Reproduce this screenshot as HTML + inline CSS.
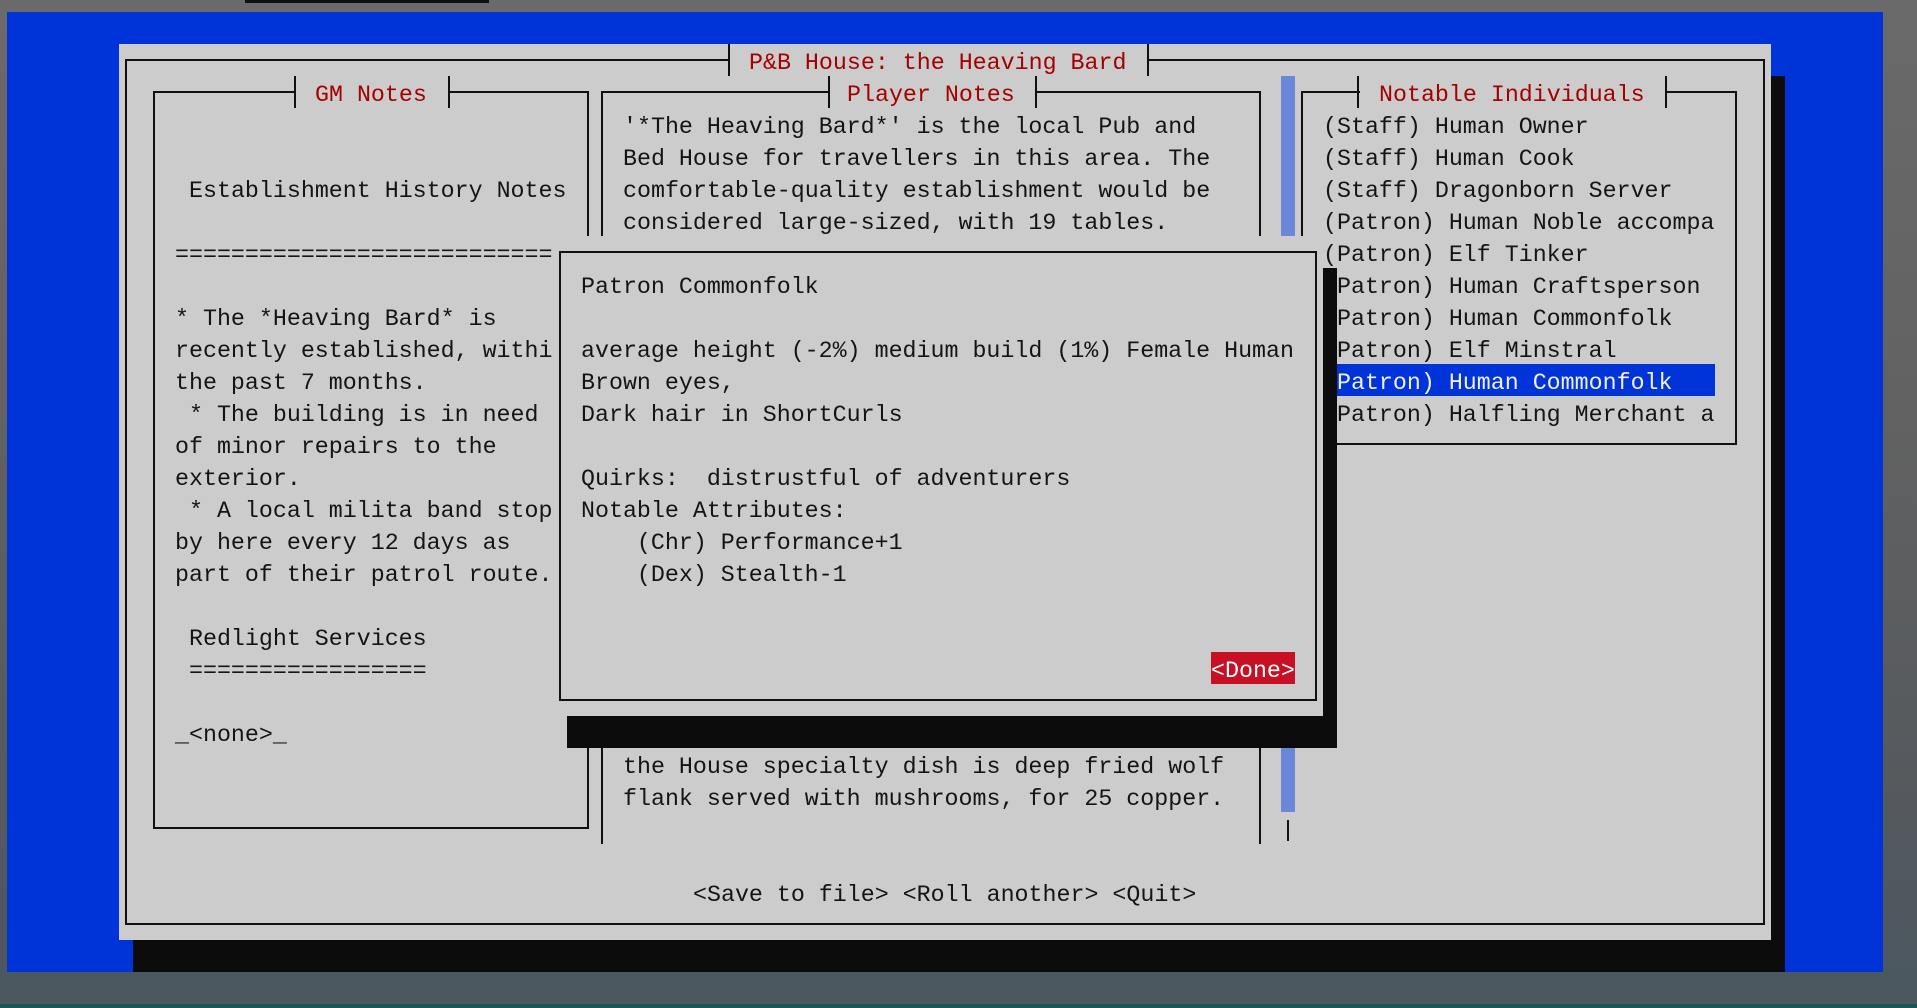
<!DOCTYPE html>
<html><head><meta charset="utf-8"><style>
*{margin:0;padding:0;box-sizing:border-box}
html,body{width:1917px;height:1008px;overflow:hidden}
body{position:relative;background:linear-gradient(180deg,#6a6a6a 0px,#626262 400px,#55595d 800px,#4b5860 1000px);font-family:"Liberation Mono","DejaVu Sans Mono",monospace}
.a{position:absolute}
.t{position:absolute;white-space:pre;font-size:23.3px;line-height:32px;height:32px;color:#141414;padding-top:3px}
.r{color:#a40000}
.h{position:absolute;height:2px;background:#111}
.v{position:absolute;width:2px;background:#111}
</style></head><body>
<div class="a" style="left:245px;top:0;width:244px;height:3px;background:#111"></div>
<div class="a" style="left:0;top:1004px;width:1917px;height:4px;background:#1b5557"></div>
<div class="a" style="left:7px;top:12px;width:1876px;height:960px;background:#0033d8"></div>
<div class="a" style="left:1771px;top:76px;width:14px;height:896px;background:#0c0c0c"></div>
<div class="a" style="left:133px;top:940px;width:1652px;height:32px;background:#0c0c0c"></div>
<div class="a" style="left:119px;top:44px;width:1652px;height:896px;background:#cccccc"></div>
<div class="a" style="left:125px;top:59px;width:1640px;height:866px;border:2px solid #111"></div>
<div class="a" style="left:729px;top:50px;width:420px;height:20px;background:#ccc"></div>
<div class="v" style="left:728px;top:44px;height:32px"></div>
<div class="v" style="left:1147px;top:44px;height:32px"></div>
<div class="t r" style="left:749px;top:44px">P&amp;B House: the Heaving Bard</div>

<div class="a" style="left:153px;top:91px;width:436px;height:738px;border:2px solid #111"></div>
<div class="a" style="left:296px;top:85px;width:152px;height:14px;background:#ccc"></div>
<div class="v" style="left:294px;top:76px;height:32px"></div>
<div class="v" style="left:448px;top:76px;height:32px"></div>
<div class="t r" style="left:315px;top:76px">GM Notes</div>
<div class="t" style="left:189px;top:172px">Establishment History Notes</div>
<div class="t" style="left:175px;top:236px">===========================</div>
<div class="t" style="left:175px;top:300px">* The *Heaving Bard* is</div>
<div class="t" style="left:175px;top:332px">recently established, withi</div>
<div class="t" style="left:175px;top:364px">the past 7 months.</div>
<div class="t" style="left:175px;top:396px"> * The building is in need</div>
<div class="t" style="left:175px;top:428px">of minor repairs to the</div>
<div class="t" style="left:175px;top:460px">exterior.</div>
<div class="t" style="left:175px;top:492px"> * A local milita band stop</div>
<div class="t" style="left:175px;top:524px">by here every 12 days as</div>
<div class="t" style="left:175px;top:556px">part of their patrol route.</div>
<div class="t" style="left:175px;top:620px"> Redlight Services</div>
<div class="t" style="left:175px;top:652px"> =================</div>
<div class="t" style="left:175px;top:716px">_&lt;none&gt;_</div>

<div class="h" style="left:601px;top:91px;width:660px"></div>
<div class="v" style="left:601px;top:91px;height:753px"></div>
<div class="v" style="left:1259px;top:91px;height:753px"></div>
<div class="a" style="left:830px;top:85px;width:205px;height:14px;background:#ccc"></div>
<div class="v" style="left:828px;top:76px;height:32px"></div>
<div class="v" style="left:1035px;top:76px;height:32px"></div>
<div class="t r" style="left:847px;top:76px">Player Notes</div>
<div class="t" style="left:623px;top:108px">'*The Heaving Bard*' is the local Pub and</div>
<div class="t" style="left:623px;top:140px">Bed House for travellers in this area. The</div>
<div class="t" style="left:623px;top:172px">comfortable-quality establishment would be</div>
<div class="t" style="left:623px;top:204px">considered large-sized, with 19 tables.</div>
<div class="t" style="left:623px;top:748px">the House specialty dish is deep fried wolf</div>
<div class="t" style="left:623px;top:780px">flank served with mushrooms, for 25 copper.</div>

<div class="a" style="left:1281px;top:76px;width:14px;height:160px;background:#6a86d8"></div>
<div class="a" style="left:1281px;top:748px;width:14px;height:64px;background:#6a86d8"></div>
<div class="v" style="left:1287px;top:820px;height:21px"></div>

<div class="a" style="left:1301px;top:91px;width:436px;height:354px;border:2px solid #111"></div>
<div class="a" style="left:1360px;top:85px;width:306px;height:14px;background:#ccc"></div>
<div class="v" style="left:1357px;top:76px;height:32px"></div>
<div class="v" style="left:1665px;top:76px;height:32px"></div>
<div class="t r" style="left:1379px;top:76px">Notable Individuals</div>
<div class="t" style="left:1323px;top:108px">(Staff) Human Owner</div>
<div class="t" style="left:1323px;top:140px">(Staff) Human Cook</div>
<div class="t" style="left:1323px;top:172px">(Staff) Dragonborn Server</div>
<div class="t" style="left:1323px;top:204px">(Patron) Human Noble accompa</div>
<div class="t" style="left:1323px;top:236px">(Patron) Elf Tinker</div>
<div class="t" style="left:1323px;top:268px">(Patron) Human Craftsperson</div>
<div class="t" style="left:1323px;top:300px">(Patron) Human Commonfolk</div>
<div class="t" style="left:1323px;top:332px">(Patron) Elf Minstral</div>
<div class="a" style="left:1337px;top:364px;width:378px;height:32px;background:#0033d8"></div>
<div class="t" style="left:1323px;top:364px;color:#f0f0f0">(Patron) Human Commonfolk</div>
<div class="t" style="left:1323px;top:396px">(Patron) Halfling Merchant a</div>

<div class="a" style="left:1323px;top:268px;width:14px;height:480px;background:#0c0c0c"></div>
<div class="a" style="left:567px;top:716px;width:770px;height:32px;background:#0c0c0c"></div>
<div class="a" style="left:553px;top:236px;width:770px;height:480px;background:#cccccc"></div>
<div class="a" style="left:559px;top:251px;width:758px;height:450px;border:2px solid #111"></div>
<div class="t" style="left:581px;top:268px">Patron Commonfolk</div>
<div class="t" style="left:581px;top:332px">average height (-2%) medium build (1%) Female Human</div>
<div class="t" style="left:581px;top:364px">Brown eyes,</div>
<div class="t" style="left:581px;top:396px">Dark hair in ShortCurls</div>
<div class="t" style="left:581px;top:460px">Quirks:  distrustful of adventurers</div>
<div class="t" style="left:581px;top:492px">Notable Attributes:</div>
<div class="t" style="left:581px;top:524px">    (Chr) Performance+1</div>
<div class="t" style="left:581px;top:556px">    (Dex) Stealth-1</div>
<div class="a" style="left:1211px;top:652px;width:84px;height:32px;background:#c81024"></div>
<div class="t" style="left:1211px;top:652px;color:#fff">&lt;Done&gt;</div>

<div class="t" style="left:693px;top:876px">&lt;Save to file&gt; &lt;Roll another&gt; &lt;Quit&gt;</div>
</body></html>
